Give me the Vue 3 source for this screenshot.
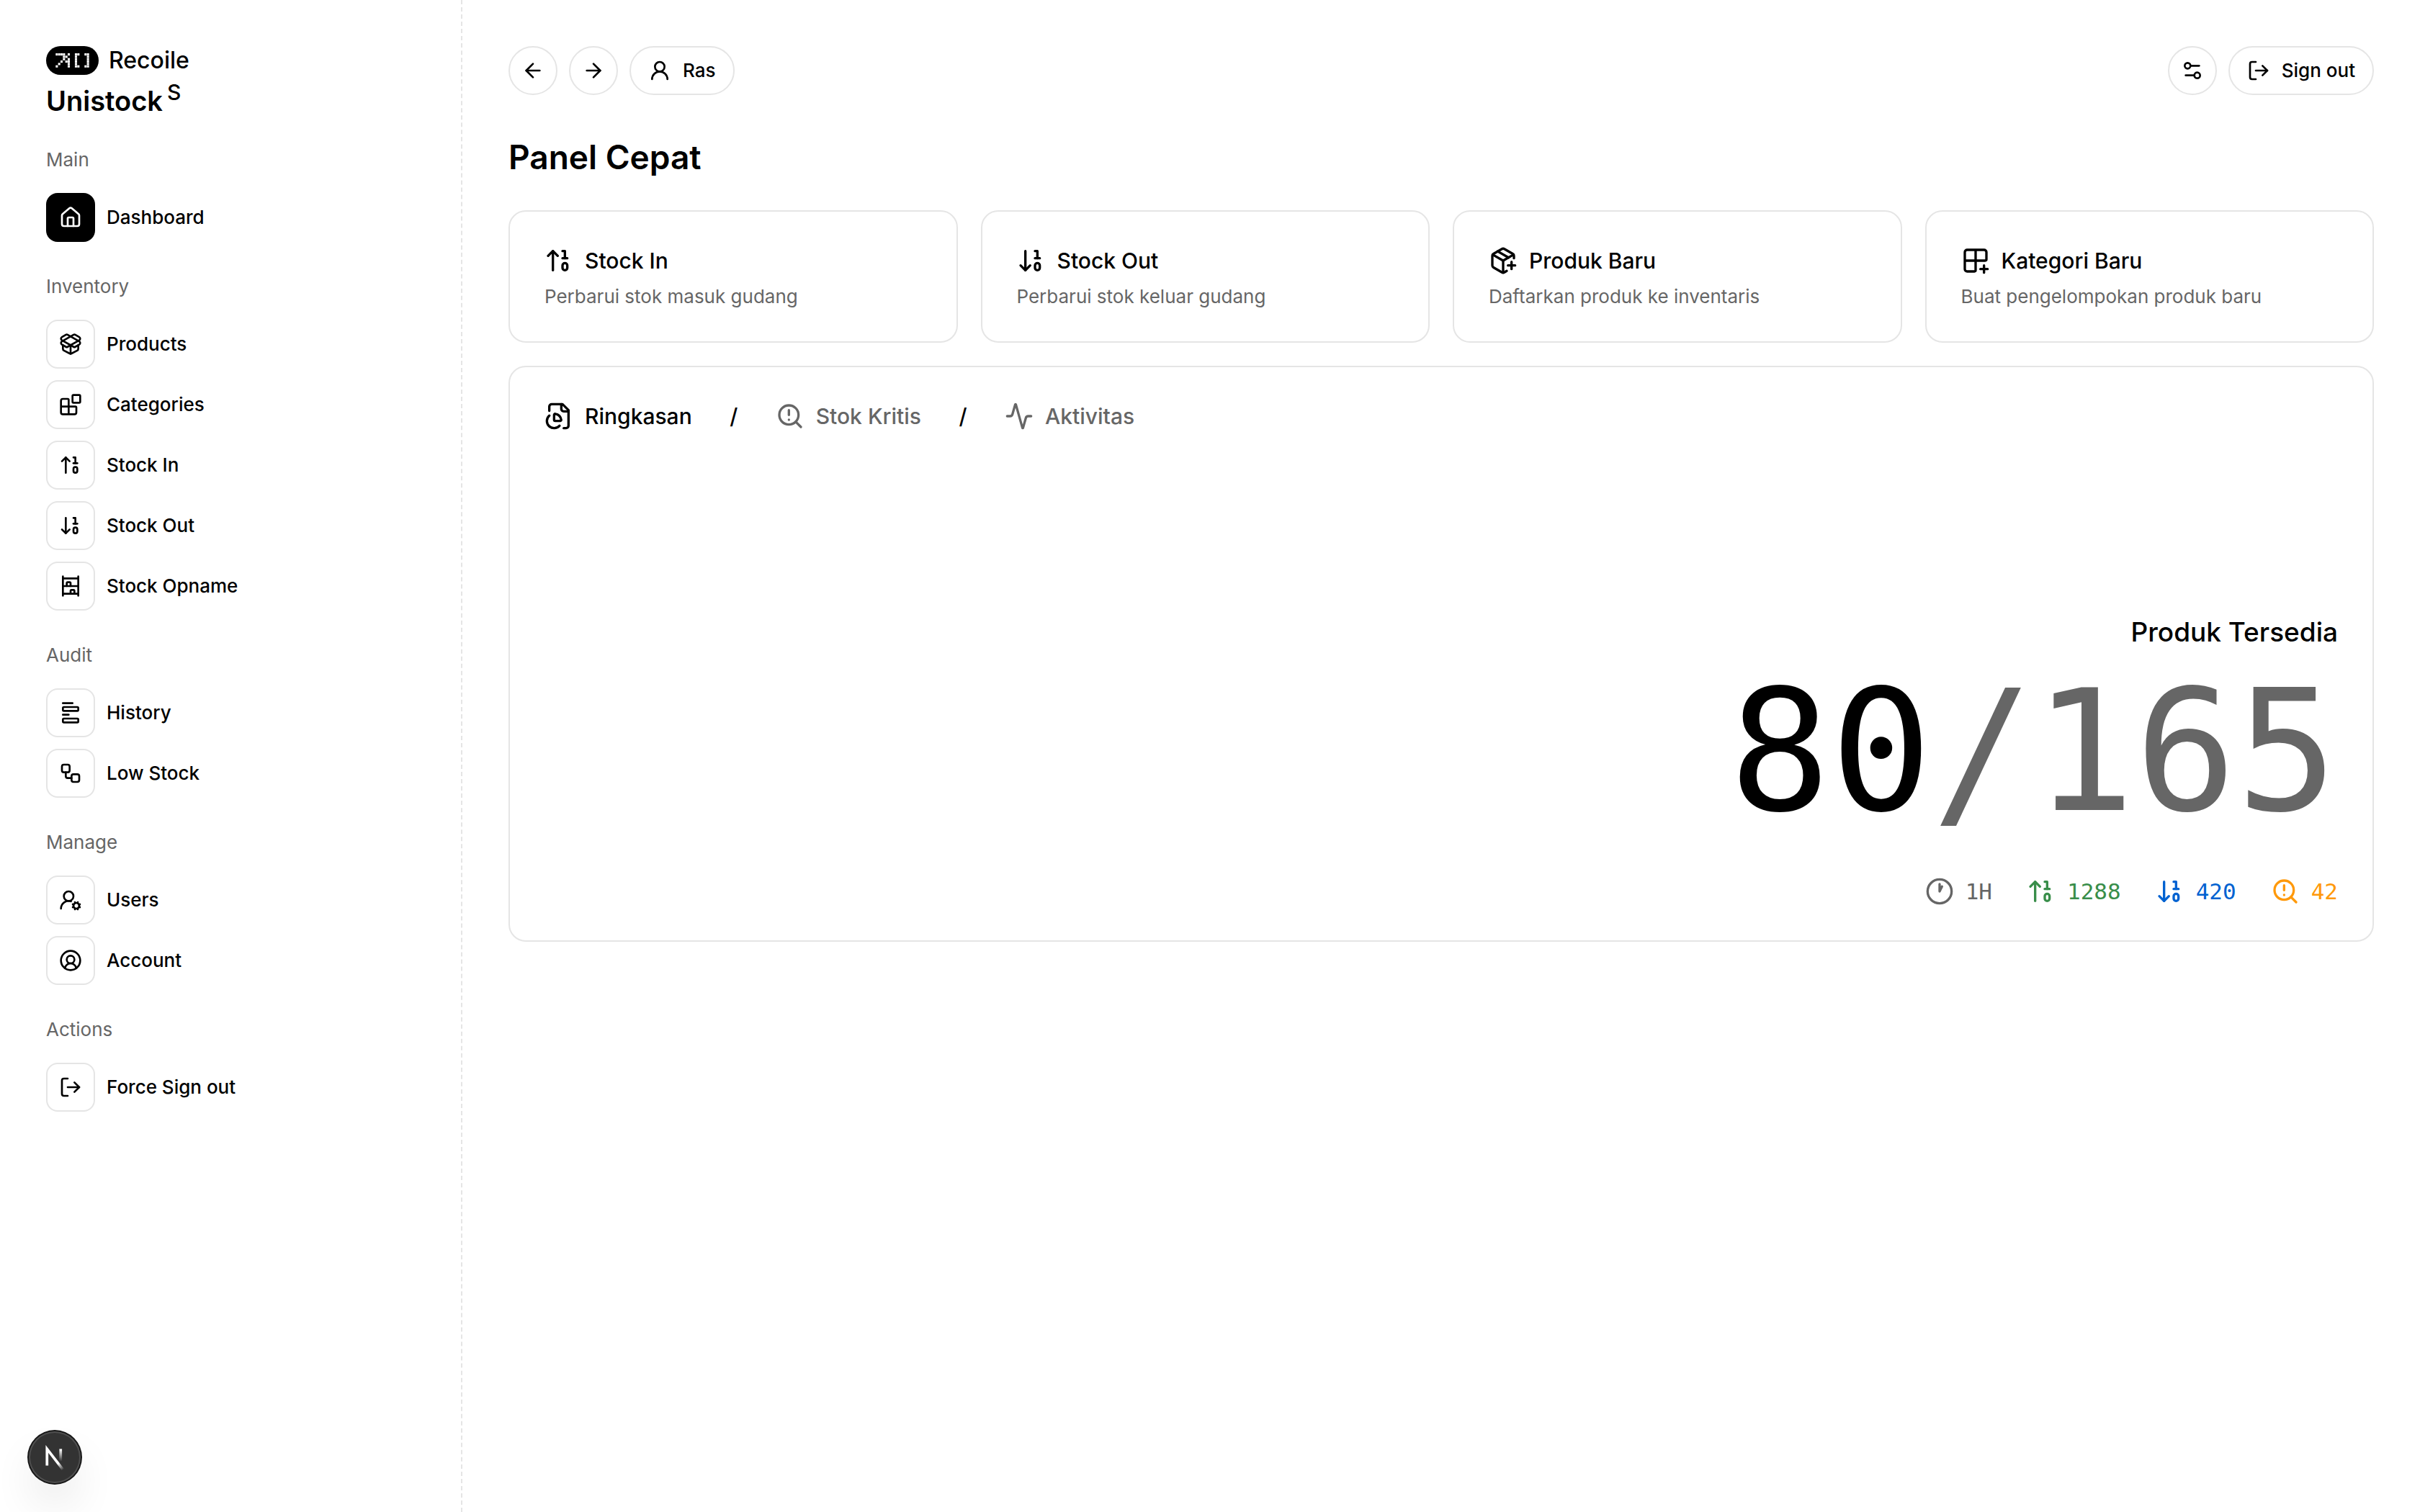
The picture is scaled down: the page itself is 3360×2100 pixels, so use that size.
<template>
  <div class="layout">
    <aside class="sidebar">
      <div class="brand">
        <div class="brand-owner">
          <svg class="brand-logo" viewBox="0 0 73 40" aria-hidden="true">
            <rect width="73" height="40" rx="20" fill="#000" />
            <rect
              v-for="cell in logoCells"
              :key="`${cell.x}-${cell.y}`"
              :x="cell.x"
              :y="cell.y"
              width="3.1"
              height="3.1"
              fill="#fff"
            />
          </svg>
          <span>Recoile</span>
        </div>
        <div class="brand-product">Unistock<sup>S</sup></div>
      </div>

      <nav v-for="group in navGroups" :key="group.label" class="nav-group" :aria-label="group.label">
        <h2 class="nav-label">{{ group.label }}</h2>
        <a
          v-for="item in group.items"
          :key="item.label"
          href="#"
          class="nav-item"
          :class="{ active: item.label === activePage }"
          @click.prevent="activePage = item.label"
        >
          <span class="nav-icon">
            <svg class="icon" viewBox="0 0 24 24" v-html="icons[item.icon]" />
          </span>
          {{ item.label }}
        </a>
      </nav>
    </aside>

    <main class="content">
      <header class="toolbar">
        <button type="button" class="pill round" aria-label="Back">
          <svg class="icon" viewBox="0 0 24 24" v-html="icons.arrowLeft" />
        </button>
        <button type="button" class="pill round" aria-label="Forward">
          <svg class="icon" viewBox="0 0 24 24" v-html="icons.arrowRight" />
        </button>
        <button type="button" class="pill">
          <svg class="icon" viewBox="0 0 24 24" v-html="icons.user" />
          Ras
        </button>
        <button type="button" class="pill round push" aria-label="Settings">
          <svg class="icon" viewBox="0 0 24 24" v-html="icons.settings" />
        </button>
        <button type="button" class="pill">
          <svg class="icon" viewBox="0 0 24 24" v-html="icons.logOut" />
          Sign out
        </button>
      </header>

      <h1 class="page-title">Panel Cepat</h1>

      <div class="quick-grid">
        <a v-for="card in quickCards" :key="card.title" href="#" class="card quick-card">
          <span class="quick-title">
            <svg class="icon large" viewBox="0 0 24 24" v-html="icons[card.icon]" />
            {{ card.title }}
          </span>
          <span class="quick-text">{{ card.text }}</span>
        </a>
      </div>

      <section class="card summary">
        <div class="tabs">
          <template v-for="(tab, index) in tabs" :key="tab.label">
            <span v-if="index > 0" class="tab-divider">/</span>
            <button
              type="button"
              class="tab"
              :class="{ active: tab.label === activeTab }"
              @click="activeTab = tab.label"
            >
              <svg class="icon large" viewBox="0 0 24 24" v-html="icons[tab.icon]" />
              {{ tab.label }}
            </button>
          </template>
        </div>

        <div class="totals">
          <div class="totals-label">Produk Tersedia</div>
          <div class="totals-value">80<span class="muted">/165</span></div>
          <div class="stats">
            <span v-for="stat in stats" :key="stat.icon" class="stat" :class="stat.tone">
              <svg class="icon large" viewBox="0 0 24 24" v-html="icons[stat.icon]" />
              {{ stat.value }}
            </span>
          </div>
        </div>
      </section>
    </main>

    <button type="button" class="dev-badge" aria-label="Dev tools">
      <svg viewBox="0 0 40 40" fill="none" aria-hidden="true">
        <defs>
          <linearGradient id="badge-diagonal" gradientUnits="userSpaceOnUse" x1="9.96" y1="11.12" x2="13.6" y2="15.6">
            <stop stop-color="#fff" />
            <stop offset="1" stop-color="#fff" stop-opacity="0" />
          </linearGradient>
          <linearGradient id="badge-stem" gradientUnits="userSpaceOnUse" x1="11.82" y1="1.4" x2="11.79" y2="9.62">
            <stop stop-color="#fff" />
            <stop offset="1" stop-color="#fff" stop-opacity="0" />
          </linearGradient>
        </defs>
        <g transform="translate(12.3 13.2)" stroke-width="1.86">
          <path d="M13.3 15.2 2.34 1v11.6" stroke="url(#badge-diagonal)" />
          <path d="M11.825 1v8.6" stroke="url(#badge-stem)" />
        </g>
      </svg>
    </button>
  </div>
</template>

<script setup>
  import { ref } from 'vue'

  const activePage = ref('Dashboard')
  const activeTab = ref('Ringkasan')

  const icons = {
    house:
      '<path d="M15 21v-8a1 1 0 0 0-1-1h-4a1 1 0 0 0-1 1v8"/><path d="M3 10a2 2 0 0 1 .709-1.528l7-5.999a2 2 0 0 1 2.582 0l7 5.999A2 2 0 0 1 21 10v9a2 2 0 0 1-2 2H5a2 2 0 0 1-2-2z"/>',
    packageOpen:
      '<path d="M12 22v-9"/><path d="M15.17 2.21a1.67 1.67 0 0 1 1.63 0L21 4.57a1.93 1.93 0 0 1 0 3.36L8.82 14.79a1.655 1.655 0 0 1-1.64 0L3 12.43a1.93 1.93 0 0 1 0-3.36z"/><path d="M20 13v3.87a2.06 2.06 0 0 1-1.11 1.83l-6 3.08a1.93 1.93 0 0 1-1.78 0l-6-3.08A2.06 2.06 0 0 1 4 16.87V13"/><path d="M21 12.43a1.93 1.93 0 0 0 0-3.36L8.83 2.2a1.64 1.64 0 0 0-1.63 0L3 4.57a1.93 1.93 0 0 0 0 3.36l12.18 6.86a1.636 1.636 0 0 0 1.63 0z"/>',
    blocks:
      '<path d="M10 22V7a1 1 0 0 0-1-1H4a2 2 0 0 0-2 2v12a2 2 0 0 0 2 2h12a2 2 0 0 0 2-2v-5a1 1 0 0 0-1-1H2"/><rect x="14" y="2" width="8" height="8" rx="1"/>',
    stockIn:
      '<path d="m3 8 4-4 4 4"/><path d="M7 4v16"/><path d="M17 10V4h-2"/><path d="M15 10h4"/><rect x="15" y="14" width="4" height="6" ry="2"/>',
    stockOut:
      '<path d="m3 16 4 4 4-4"/><path d="M7 20V4"/><path d="M17 10V4h-2"/><path d="M15 10h4"/><rect x="15" y="14" width="4" height="6" ry="2"/>',
    shelving:
      '<path d="M12 12V9a1 1 0 0 0-1-1H9a1 1 0 0 0-1 1v3"/><path d="M16 20v-3a1 1 0 0 0-1-1h-2a1 1 0 0 0-1 1v3"/><path d="M20 22V2"/><path d="M4 12h16"/><path d="M4 20h16"/><path d="M4 2v20"/><path d="M4 4h16"/>',
    history:
      '<path d="M4 2h10"/><rect x="4" y="6" width="16" height="4" rx="1"/><path d="M4 14h6"/><rect x="4" y="18" width="16" height="4" rx="1"/>',
    workflow:
      '<rect x="3" y="3" width="8" height="8" rx="2"/><path d="M7 11v4a2 2 0 0 0 2 2h4"/><rect x="13" y="13" width="8" height="8" rx="2"/>',
    userCog:
      '<circle cx="10" cy="8" r="5"/><path d="M2 21a8 8 0 0 1 10.434-7.62"/><circle cx="18" cy="18" r="3"/><path d="m14.305 19.53.923-.382"/><path d="m15.228 16.852-.923-.383"/><path d="m16.852 15.228-.383-.923"/><path d="m16.852 20.772-.383.924"/><path d="m19.148 15.228.383-.923"/><path d="m19.53 21.696-.382-.924"/><path d="m20.772 16.852.924-.383"/><path d="m20.772 19.148.924.383"/>',
    userCircle:
      '<path d="M17.925 20.056a6 6 0 0 0-11.851.001"/><circle cx="12" cy="11" r="4"/><circle cx="12" cy="12" r="10"/>',
    logOut:
      '<path d="m16 17 5-5-5-5"/><path d="M21 12H9"/><path d="M9 21H5a2 2 0 0 1-2-2V5a2 2 0 0 1 2-2h4"/>',
    arrowLeft: '<path d="m12 19-7-7 7-7"/><path d="M19 12H5"/>',
    arrowRight: '<path d="M5 12h14"/><path d="m12 5 7 7-7 7"/>',
    user: '<circle cx="12" cy="8" r="5"/><path d="M20 21a8 8 0 0 0-16 0"/>',
    settings:
      '<path d="M14 17H5"/><path d="M19 7h-9"/><circle cx="17" cy="17" r="3"/><circle cx="7" cy="7" r="3"/>',
    packagePlus:
      '<path d="M16 16h6"/><path d="M19 13v6"/><path d="M21 10V8a2 2 0 0 0-1-1.73l-7-4a2 2 0 0 0-2 0l-7 4A2 2 0 0 0 3 8v8a2 2 0 0 0 1 1.73l7 4a2 2 0 0 0 2 0l2-1.14"/><path d="m7.5 4.27 9 5.15"/><path d="M3.29 7 12 12l8.71-5"/><path d="M12 22V12"/>',
    gridPlus:
      '<path d="M12 3v17a1 1 0 0 1-1 1H5a2 2 0 0 1-2-2V5a2 2 0 0 1 2-2h14a2 2 0 0 1 2 2v6a1 1 0 0 1-1 1H3"/><path d="M16 19h6"/><path d="M19 22v-6"/>',
    filePie:
      '<path d="M14 2v4a2 2 0 0 0 2 2h4"/><path d="M16 22h2a2 2 0 0 0 2-2V7l-5-5H6a2 2 0 0 0-2 2v3.5"/><path d="M4.017 11.512a6 6 0 1 0 8.466 8.475"/><path d="M9 16a1 1 0 0 1-1-1v-4c0-.552.45-1.008.995-.917a6 6 0 0 1 4.922 4.922c.091.544-.365.995-.917.995z"/>',
    searchAlert:
      '<circle cx="11" cy="11" r="8"/><path d="m21 21-4.3-4.3"/><path d="M11 7v4"/><path d="M11 15h.01"/>',
    activity:
      '<path d="M22 12h-2.48a2 2 0 0 0-1.93 1.46l-2.35 8.36a.25.25 0 0 1-.48 0L9.24 2.18a.25.25 0 0 0-.48 0l-2.35 8.36A2 2 0 0 1 4.49 12H2"/>',
    clock: '<path d="M12 6v6l2-4"/><circle cx="12" cy="12" r="10"/>',
  }

  // Pixel logo, one character per cell
  const logoRows = [
    '####.#..##..##',
    '...##...#....#',
    '...#.#..#....#',
    '..#.##..#....#',
    '.#...#..#....#',
    '#....#..##..##',
  ]

  const logoCells = logoRows.flatMap((row, y) =>
    [...row].flatMap((cell, x) => (cell === '#' ? [{ x: 13.3 + x * 3.33, y: 10 + y * 3.33 }] : []))
  )

  const navGroups = [
    { label: 'Main', items: [{ label: 'Dashboard', icon: 'house' }] },
    {
      label: 'Inventory',
      items: [
        { label: 'Products', icon: 'packageOpen' },
        { label: 'Categories', icon: 'blocks' },
        { label: 'Stock In', icon: 'stockIn' },
        { label: 'Stock Out', icon: 'stockOut' },
        { label: 'Stock Opname', icon: 'shelving' },
      ],
    },
    {
      label: 'Audit',
      items: [
        { label: 'History', icon: 'history' },
        { label: 'Low Stock', icon: 'workflow' },
      ],
    },
    {
      label: 'Manage',
      items: [
        { label: 'Users', icon: 'userCog' },
        { label: 'Account', icon: 'userCircle' },
      ],
    },
    { label: 'Actions', items: [{ label: 'Force Sign out', icon: 'logOut' }] },
  ]

  const quickCards = [
    { title: 'Stock In', text: 'Perbarui stok masuk gudang', icon: 'stockIn' },
    { title: 'Stock Out', text: 'Perbarui stok keluar gudang', icon: 'stockOut' },
    { title: 'Produk Baru', text: 'Daftarkan produk ke inventaris', icon: 'packagePlus' },
    { title: 'Kategori Baru', text: 'Buat pengelompokan produk baru', icon: 'gridPlus' },
  ]

  const tabs = [
    { label: 'Ringkasan', icon: 'filePie' },
    { label: 'Stok Kritis', icon: 'searchAlert' },
    { label: 'Aktivitas', icon: 'activity' },
  ]

  const stats = [
    { value: '1H', icon: 'clock', tone: 'muted' },
    { value: '1288', icon: 'stockIn', tone: 'green' },
    { value: '420', icon: 'stockOut', tone: 'blue' },
    { value: '42', icon: 'searchAlert', tone: 'amber' },
  ]
</script>

<style>
  body {
    background-color: #fff;
  }
</style>

<style scoped>
  .layout {
    display: flex;
    min-height: 100vh;
    color: #000;
    font-family: Inter, 'Liberation Sans', sans-serif;
    font-size: 26px;
    font-weight: 500;
    line-height: 40px;
  }

  .layout * {
    box-sizing: border-box;
  }

  a {
    color: inherit;
    text-decoration: none;
  }

  button {
    margin: 0;
    padding: 0;
    border: none;
    background: none;
    color: inherit;
    font: inherit;
    cursor: pointer;
  }

  .icon {
    flex: none;
    width: 32px;
    height: 32px;
    fill: none;
    stroke: currentColor;
    stroke-width: 2;
    stroke-linecap: round;
    stroke-linejoin: round;
  }

  .icon.large {
    width: 40px;
    height: 40px;
  }

  .muted {
    color: #666;
  }

  /* Sidebar */
  .sidebar {
    display: flex;
    flex: none;
    flex-direction: column;
    gap: 40px;
    width: 642px;
    padding: 64px;
    border-right: 2px dashed #e5e5e5;
  }

  .brand {
    display: flex;
    flex-direction: column;
    gap: 16px;
  }

  .brand-owner {
    display: flex;
    align-items: center;
    gap: 14px;
    font-size: 32px;
  }

  .brand-logo {
    width: 73px;
    height: 40px;
  }

  .brand-product {
    font-size: 38px;
    font-weight: 600;
  }

  .brand-product sup {
    margin-left: 6px;
    font-size: 30px;
    font-weight: 500;
    line-height: 0;
    vertical-align: 15px;
  }

  .nav-group {
    display: flex;
    flex-direction: column;
    align-items: flex-start;
    gap: 16px;
  }

  .nav-label {
    margin: 0 0 8px;
    color: #666;
    font-size: 26px;
    font-weight: 400;
    line-height: 44px;
  }

  .nav-item {
    display: flex;
    align-items: center;
    gap: 16px;
  }

  .nav-icon {
    display: flex;
    align-items: center;
    justify-content: center;
    width: 68px;
    height: 68px;
    border: 2px solid #e5e5e5;
    border-radius: 16px;
  }

  .nav-item.active .nav-icon {
    border-color: #000;
    background-color: #000;
    color: #fff;
  }

  /* Content */
  .content {
    flex: 1;
    min-width: 0;
    padding: 64px;
  }

  .toolbar {
    display: flex;
    gap: 16px;
  }

  .pill {
    display: flex;
    align-items: center;
    justify-content: center;
    gap: 16px;
    height: 68px;
    padding: 0 24px;
    border: 2px solid #e5e5e5;
    border-radius: 34px;
  }

  .pill.round {
    width: 68px;
    padding: 0;
  }

  .push {
    margin-left: auto;
  }

  .page-title {
    margin: 54px 0 42px;
    font-size: 46px;
    font-weight: 600;
    line-height: 64px;
  }

  .card {
    border: 2px solid #e5e5e5;
    border-radius: 24px;
    padding: 48px;
  }

  .quick-grid {
    display: grid;
    grid-template-columns: repeat(4, 1fr);
    gap: 32px;
  }

  .quick-card {
    display: flex;
    flex-direction: column;
    gap: 16px;
  }

  .quick-title {
    display: flex;
    gap: 16px;
    font-size: 30px;
  }

  .quick-text {
    color: #666;
    font-weight: 400;
    line-height: 28px;
  }

  .summary {
    display: flex;
    flex-direction: column;
    justify-content: space-between;
    min-height: 800px;
    margin-top: 32px;
  }

  .tabs {
    display: flex;
    gap: 48px;
    font-size: 30px;
  }

  .tab {
    display: flex;
    gap: 16px;
    color: #666;
  }

  .tab.active {
    color: #000;
  }

  .tab-divider {
    width: 20px;
    text-align: center;
  }

  .totals {
    display: flex;
    flex-direction: column;
    align-items: flex-end;
  }

  .totals-label {
    font-size: 37px;
  }

  .totals-value {
    margin: 18px 0 46px;
    font-family: 'DejaVu Sans Mono', monospace;
    font-size: 234px;
    font-weight: 400;
    line-height: 256px;
  }

  .stats {
    display: flex;
    gap: 48px;
    font-family: 'DejaVu Sans Mono', monospace;
    font-size: 31px;
    font-weight: 400;
  }

  .stat {
    display: flex;
    gap: 16px;
  }

  .green {
    color: #398e4a;
  }

  .blue {
    color: #0062d1;
  }

  .amber {
    color: #ff990a;
  }

  .dev-badge {
    position: fixed;
    bottom: 40px;
    left: 40px;
    display: flex;
    align-items: center;
    justify-content: center;
    width: 72px;
    height: 72px;
    border-radius: 50%;
    background-color: #333;
    box-shadow:
      0 0 0 2px #171717,
      inset 0 0 0 2px rgba(255, 255, 255, 0.14),
      0 32px 64px -16px rgba(0, 0, 0, 0.24);
  }

  .dev-badge svg {
    flex: none;
    width: 80px;
    height: 80px;
  }
</style>
